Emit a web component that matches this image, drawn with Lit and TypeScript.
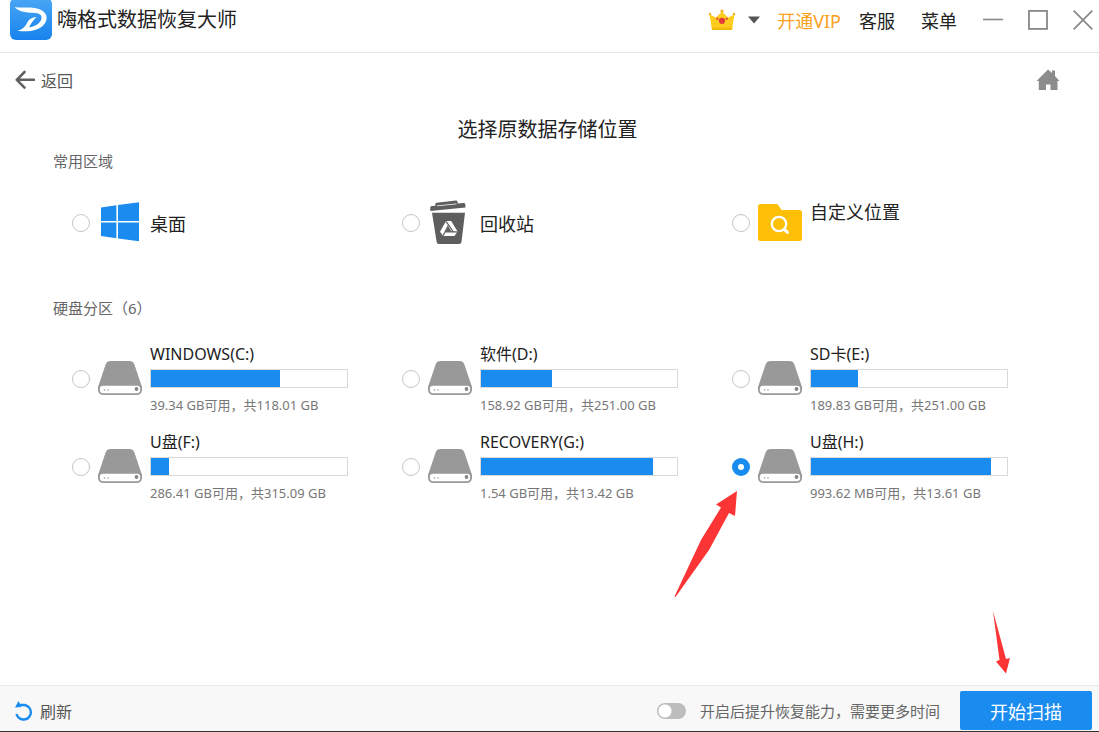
import { LitElement, html, css, svg, nothing } from "lit";
import { customElement, property, state } from "lit/decorators.js";

interface Place {
  id: string;
  label: string;
  icon: "windows" | "bin" | "folder" | "drive";
  free?: string;
  total?: string;
  used?: number;
  raised?: boolean;
}

const COMMON: Place[] = [
  { id: "desktop", label: "桌面", icon: "windows" },
  { id: "recycle", label: "回收站", icon: "bin" },
  { id: "custom", label: "自定义位置", icon: "folder", raised: true },
];

const DRIVES: Place[] = [
  { id: "c", label: "WINDOWS(C:)", icon: "drive", free: "39.34 GB", total: "118.01 GB", used: 66 },
  { id: "d", label: "软件(D:)", icon: "drive", free: "158.92 GB", total: "251.00 GB", used: 36 },
  { id: "e", label: "SD卡(E:)", icon: "drive", free: "189.83 GB", total: "251.00 GB", used: 24 },
  { id: "f", label: "U盘(F:)", icon: "drive", free: "286.41 GB", total: "315.09 GB", used: 9 },
  { id: "g", label: "RECOVERY(G:)", icon: "drive", free: "1.54 GB", total: "13.42 GB", used: 88 },
  { id: "h", label: "U盘(H:)", icon: "drive", free: "993.62 MB", total: "13.61 GB", used: 92 },
];

const ICONS = {
  windows: svg`
    <path fill="#1a8cf0" d="M3 7.400 18.400 5.200V21H3zM20 5 41 2.200V21H20zM3 22.600H18.400V38.200L3 36zM20 22.600H41V41.200L20 38.400z"/>`,
  bin: svg`
    <path fill="#5e5e5e" d="M8.500 2.700 28 .6q1.300 0 1.500 1.200l.3 1.800 6-.6q1.400 0 1.500 1.300l.2 3.200L2.300 11V7.500q0-1.200 1.300-1.400l3.800-.3-.1-1.600q0-1.300 1.200-1.500z"/>
    <path fill="#fff" d="M9 5.500 28.500 3.500v.8L9 6.300z"/>
    <path fill="#5e5e5e" d="M4 12.800H37L33.500 41.800q-.3 2.200-2.400 2.200H11q-2.100 0-2.400-2.200z"/>
    <path fill="#fff" d="M18 21h5.200l6.300 10.400-3 4.600H15.200l-3.200-4.200z"/>
    <path fill="none" stroke="#5e5e5e" stroke-width="1.200" d="M18 21.300 25.500 32M20.500 25 15 35.800M16.500 31.800H29"/>
    <path fill="#5e5e5e" d="M20.300 26.500 23.800 31.800H17.500z"/>`,
  folder: svg`
    <path fill="#fdbf07" d="M2.500 4H18q1.500 0 2.400 1.200L23.500 10H41.500Q44 10 44 12.500V38.500Q44 41 41.500 41H2.500Q0 41 0 38.500V6.500Q0 4 2.500 4z"/>
    <circle cx="21" cy="24" r="7.200" fill="none" stroke="#fff" stroke-width="2.300"/>
    <path d="m26.200 29.300 3.300 3" stroke="#fff" stroke-width="3" stroke-linecap="round"/>`,
  drive: svg`
    <path fill="#999" d="M12.500 5h19q3.500 0 4.800 3.200L44 31v3.500Q43 39 38.500 39H5.500Q1 39 0 34.500V31L7.700 8.200Q9 5 12.500 5z"/>
    <rect x="1.800" y="29.800" width="40.400" height="7.400" rx="3.400" fill="#fff"/>
    <circle cx="6.500" cy="34" r=".8" fill="#999"/>
    <circle cx="10" cy="34" r=".8" fill="#999"/>
    <circle cx="38.500" cy="33" r="1.900" fill="#858585"/>`,
};

const sharedText = css`
  button,
  input {
    font: inherit;
    color: inherit;
    margin: 0;
    padding: 0;
    border: 0;
    background: none;
  }
  svg {
    display: block;
    flex: none;
  }
`;

@customElement("place-option")
export class PlaceOption extends LitElement {
  @property({ attribute: false }) place!: Place;
  @property({ type: Boolean }) selected = false;

  static styles = [
    sharedText,
    css`
      :host {
        display: block;
      }
      .option {
        display: flex;
        align-items: center;
        gap: 8px;
        min-height: 73px;
      }
      .radio {
        appearance: none;
        box-sizing: border-box;
        flex: none;
        width: 18px;
        height: 18px;
        border: 1px solid #c6c6c6;
        border-radius: 50%;
        background: #fff;
      }
      .radio:checked {
        border: 6px solid #1a8cf0;
      }
      .body {
        width: 198px;
      }
      .label {
        display: block;
        line-height: 24px;
        font-size: 16px;
        color: #222;
      }
      .place {
        padding-top: 2px;
        font-size: 18px;
      }
      .raised {
        padding-bottom: 24px;
      }
      .bar {
        box-sizing: border-box;
        height: 19px;
        margin-top: 3px;
        border: 1px solid #d9d9d9;
        background: #fff;
      }
      .fill {
        height: 100%;
        background: #1a8cf0;
      }
      .caption {
        display: block;
        margin-top: 7px;
        font-size: 13px;
        line-height: 20px;
        color: #777;
        white-space: nowrap;
      }
    `,
  ];

  private pick() {
    this.dispatchEvent(new CustomEvent("pick", { detail: this.place.id }));
  }

  render() {
    const p = this.place;
    const drive = p.used !== undefined;
    return html`
      <label class="option">
        <input class="radio" type="radio" name="place" .checked=${this.selected} @change=${this.pick} />
        <svg width="44" height="45" viewBox="0 0 44 45" aria-hidden="true">${ICONS[p.icon]}</svg>
        <span class="body">
          <span class="label ${drive ? "" : "place"} ${p.raised ? "raised" : ""}">${p.label}</span>
          ${drive
            ? html`<div class="bar"><div class="fill" style="width:${p.used}%"></div></div>
                <span class="caption">${p.free}可用，共${p.total}</span>`
            : nothing}
        </span>
      </label>
    `;
  }
}

@customElement("app-root")
export class AppRoot extends LitElement {
  @state() private selected = "h";

  static styles = [
    sharedText,
    css`
      :host {
        display: flex;
        flex-direction: column;
        position: relative;
        min-height: 100vh;
        background: #fff;
        color: #222;
        font-family: "Noto Sans", "Noto Sans CJK SC", sans-serif;
      }
      header {
        display: flex;
        align-items: center;
        justify-content: space-between;
        height: 40px;
        padding: 0 6px 12px 10px;
        border-bottom: 1px solid #e6e6e6;
      }
      .brand,
      .menu,
      .windowing,
      .vip,
      .back,
      .refresh,
      .deep {
        display: flex;
        align-items: center;
      }
      .brand {
        gap: 5px;
      }
      h1,
      h2,
      h3 {
        margin: 0;
        font-weight: 400;
      }
      h1,
      h2 {
        font-size: 20px;
        line-height: 28px;
      }
      .menu {
        gap: 26px;
        font-size: 18px;
      }
      .vip {
        gap: 12px;
        margin-right: -8px;
      }
      .vip-text {
        margin-left: 5px;
        color: #f9a11b;
      }
      .windowing {
        gap: 25px;
      }
      nav {
        display: flex;
        align-items: center;
        justify-content: space-between;
        height: 54px;
        padding: 0 39px 0 14px;
      }
      .back,
      .refresh {
        gap: 6px;
        font-size: 16px;
        color: #555;
      }
      main {
        flex: 1;
        padding: 9px 37px 24px 53px;
      }
      h2 {
        margin-bottom: 5px;
        padding-right: 20px;
        text-align: center;
      }
      h3 {
        font-size: 15px;
        line-height: 24px;
        color: #666;
      }
      .grid {
        display: grid;
        grid-template-columns: repeat(3, 1fr);
        row-gap: 15px;
        padding-left: 19px;
      }
      .common {
        margin: 13px 0 37px;
      }
      .drives {
        margin-top: 22px;
      }
      footer {
        display: flex;
        align-items: center;
        justify-content: space-between;
        padding: 5px 7px 1px 14px;
        background: #f8f8f8;
        border-top: 1px solid #ececec;
        border-bottom: 1px solid #333;
      }
      .actions {
        display: flex;
        align-items: center;
        gap: 20px;
      }
      .deep {
        gap: 14px;
        font-size: 15px;
        color: #666;
      }
      .switch {
        appearance: none;
        width: 29px;
        height: 16px;
        border-radius: 8px;
        background: radial-gradient(circle at 8px 8px, #fff 6px, #bdbdbd 7px);
      }
      .switch:checked {
        background: radial-gradient(circle at 21px 8px, #fff 6px, #1a8cf0 7px);
      }
      .scan {
        width: 132px;
        height: 39px;
        border-radius: 2px;
        background: #1a8cf0;
        color: #fff;
        font-size: 18px;
      }
      .pointer {
        position: absolute;
        pointer-events: none;
      }
      .to-drive {
        left: 673px;
        top: 490px;
      }
      .to-scan {
        right: 87px;
        bottom: 58px;
      }
    `,
  ];

  private list(items: Place[]) {
    return items.map(
      (p) => html`<place-option
        .place=${p}
        .selected=${p.id === this.selected}
        @pick=${(e: CustomEvent<string>) => (this.selected = e.detail)}
      ></place-option>`
    );
  }

  render() {
    return html`
      <header>
        <div class="brand">
          <svg width="42" height="40" viewBox="0 2 42 40" aria-hidden="true">
            <defs>
              <linearGradient id="g" x1="0" y1="0" x2="0" y2="1">
                <stop offset="0" stop-color="#4aa6f5" />
                <stop offset="1" stop-color="#1783ee" />
              </linearGradient>
            </defs>
            <rect width="42" height="42" rx="6" fill="url(#g)" />
            <path
              fill="#fff"
              d="M4.500 9C11 10.500 20 8.500 27 10.500 34 12.500 37.500 16.500 36.500 21.500 35 28.500 27 33 17 33.300 13 33.400 10 33.200 7.500 32.800 12 31.500 14.500 29.500 16.500 26 18.500 22 20.500 19.500 26.500 19 23.500 22 21 25.500 19 29.300 25 28.500 30.500 25.500 31.500 20.500 32.300 16.500 28.500 15 23.500 14.800 15 14.500 8.500 13.500 4.500 9z"
            />
          </svg>
          <h1>嗨格式数据恢复大师</h1>
        </div>
        <div class="menu">
          <button class="vip">
            <svg width="28" height="22" viewBox="0 0 28 22" aria-hidden="true">
              <path fill="#fdce20" d="M1.500 5.500 8 8.500 14 2.500 20 8.500 26.500 5.500 24 21H4z" />
              <path fill="#f6b80c" d="M3.700 18.500H24.300L24 21H4z" />
              <g fill="#f6b320">
                <circle cx="2" cy="5" r="1.300" />
                <circle cx="14" cy="2" r="1.600" />
                <circle cx="26" cy="5" r="1.300" />
              </g>
              <circle cx="14" cy="11.800" r="3.100" fill="#e33a3a" />
              <circle cx="9.300" cy="9.800" r="1.300" fill="#ea5a3a" />
              <circle cx="18.700" cy="9.800" r="1.300" fill="#ea5a3a" />
            </svg>
            <svg width="12" height="8" viewBox="0 0 12 8" aria-hidden="true"><path fill="#555" d="M0 .5H12L6 7.500z" /></svg>
            <span class="vip-text">开通VIP</span>
          </button>
          <button>客服</button>
          <button>菜单</button>
          <div class="windowing">
            <button aria-label="最小化">
              <svg width="20" height="20" viewBox="0 0 20 20"><path d="M0 9.500H20" stroke="#888" stroke-width="1.600" /></svg>
            </button>
            <button aria-label="最大化">
              <svg width="20" height="20" viewBox="0 0 20 20">
                <rect x="1" y=".9" width="18" height="18" fill="none" stroke="#888" stroke-width="1.800" />
              </svg>
            </button>
            <button aria-label="关闭">
              <svg width="20" height="20" viewBox="0 0 20 20"><path d="M.7.7 19.300 19.300M19.300.7.7 19.300" stroke="#888" stroke-width="1.700" /></svg>
            </button>
          </div>
        </div>
      </header>
      <nav>
        <button class="back">
          <svg width="21" height="20" viewBox="0 0 21 20" aria-hidden="true">
            <path
              d="M10.500 2 2.800 9.800 10.500 17.600M2.800 9.800H20"
              fill="none"
              stroke="#606060"
              stroke-width="2.600"
              stroke-linecap="round"
              stroke-linejoin="round"
            />
          </svg>
          返回
        </button>
        <button aria-label="主页">
          <svg width="24" height="22" viewBox="0 0 24 22">
            <path fill="#8c8c8c" d="M12 .5 16 4V1.500h3V7L23.500 12H21.500V21H14.500V15.500H10V21H2.800V12H.5z" />
          </svg>
        </button>
      </nav>
      <main>
        <h2>选择原数据存储位置</h2>
        <h3>常用区域</h3>
        <div class="grid common">${this.list(COMMON)}</div>
        <h3>硬盘分区（6）</h3>
        <div class="grid drives">${this.list(DRIVES)}</div>
      </main>
      <footer>
        <button class="refresh">
          <svg width="20" height="20" viewBox="0 0 20 20" aria-hidden="true">
            <path d="M5.500 4H10.500A7.300 7.300 0 1 1 2.500 13" fill="none" stroke="#1a8cf0" stroke-width="2.400" />
            <path fill="#1a8cf0" d="M4.500 0 7.500 6 1 6.500z" />
          </svg>
          刷新
        </button>
        <div class="actions">
          <label class="deep">
            <input class="switch" type="checkbox" role="switch" />
            开启后提升恢复能力，需要更多时间
          </label>
          <button class="scan">开始扫描</button>
        </div>
      </footer>
      <svg class="pointer to-drive" width="66" height="109" viewBox="0 0 66 109" aria-hidden="true">
        <path fill="#fb3535" d="M64 1 43 14.500 48 17.500 28 50 1.500 106.500 2.500 107 36 60 56 23 62 26z" />
      </svg>
      <svg class="pointer to-scan" width="20" height="64" viewBox="0 0 20 64" aria-hidden="true">
        <path fill="#fb3535" d="M1 1 7.500 50 4 51.500 14 63.500 18 48 14 49z" />
      </svg>
    `;
  }
}
